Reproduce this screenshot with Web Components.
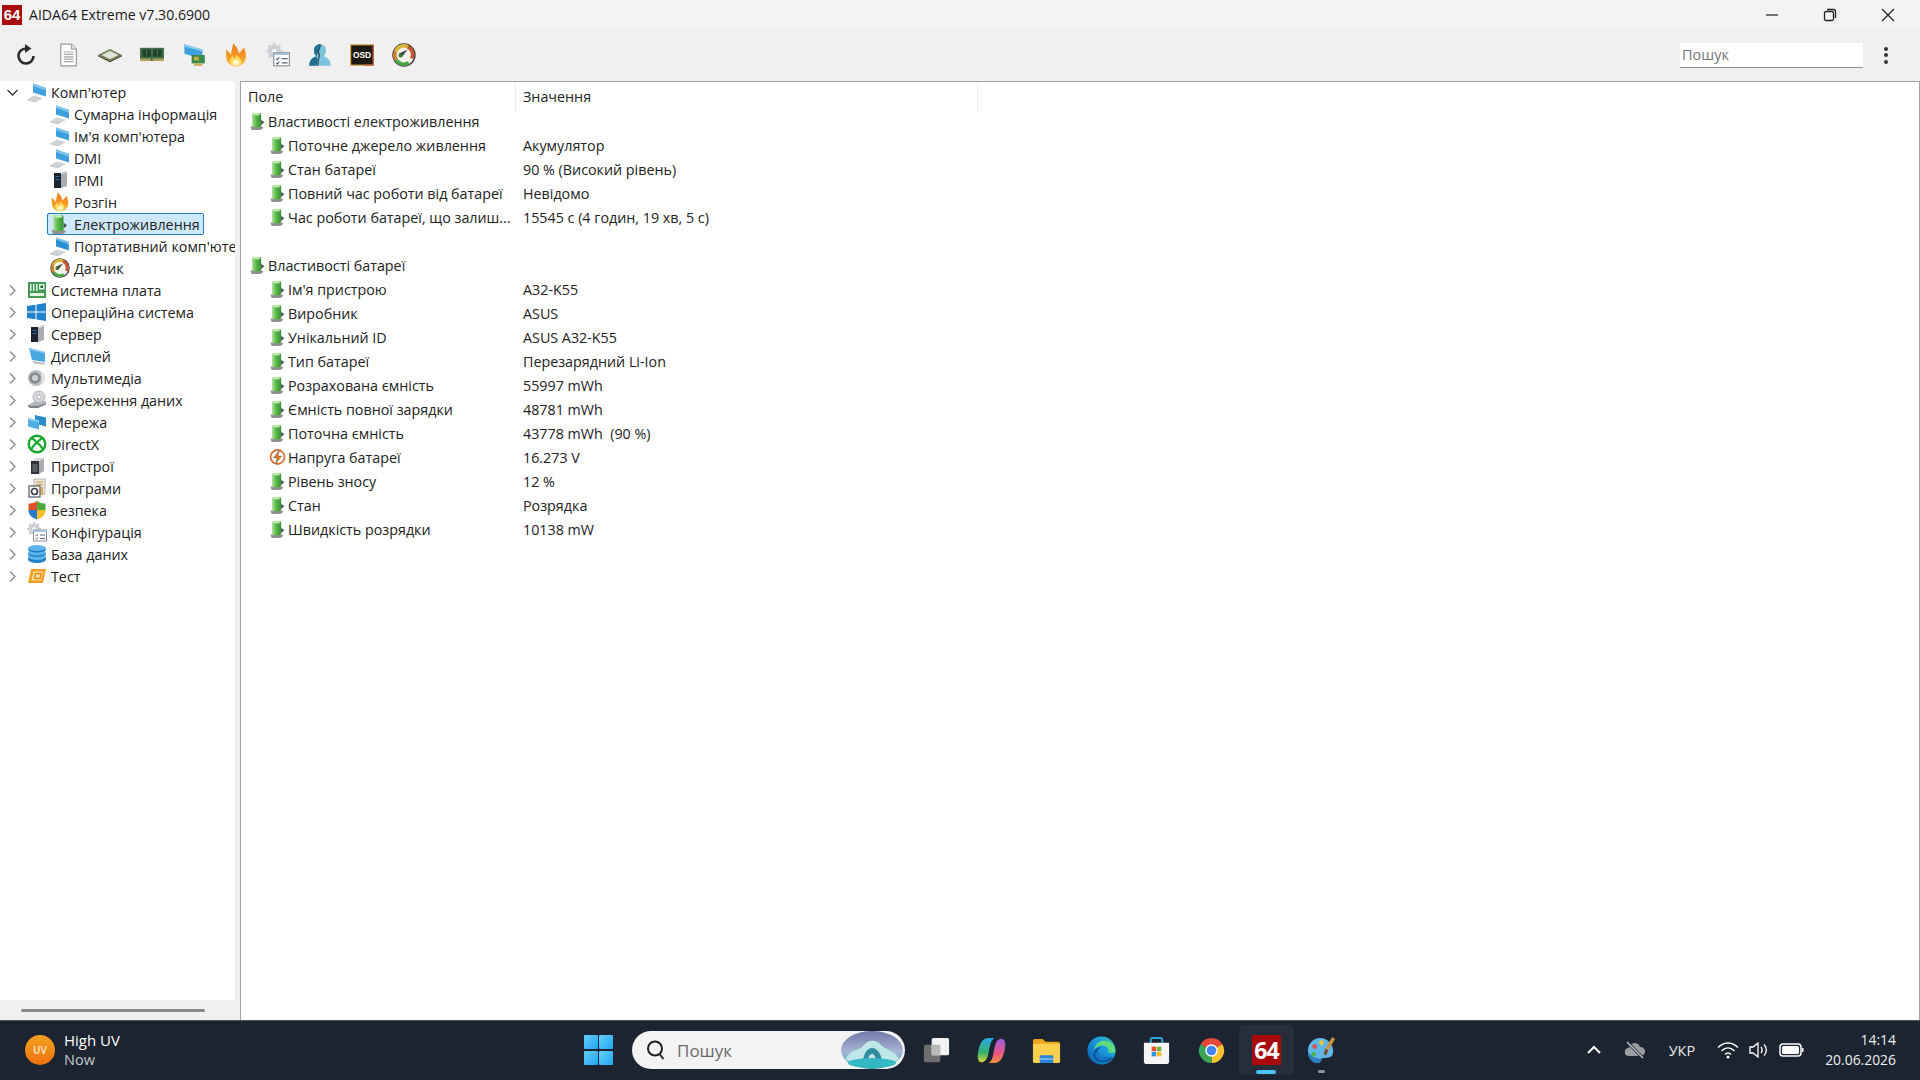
<!DOCTYPE html>
<html lang="uk">
<head>
<meta charset="utf-8">
<title>AIDA64 Extreme</title>
<style>
  html, body { margin: 0; height: 100%; overflow: hidden; }
  body { font-family: "Open Sans", "Noto Sans", sans-serif; font-size: 14.3px; color: #222; }
</style>
</head>
<body>
<aida-window>
  <title-bar slot="title">AIDA64 Extreme v7.30.6900</title-bar>
  <tool-bar slot="tools"></tool-bar>

  <nav-tree slot="nav">
    <tree-item open icon="computer">Комп'ютер</tree-item>
    <tree-item child icon="computer">Сумарна інформація</tree-item>
    <tree-item child icon="computer">Ім'я комп'ютера</tree-item>
    <tree-item child icon="computer">DMI</tree-item>
    <tree-item child icon="server">IPMI</tree-item>
    <tree-item child icon="flame">Розгін</tree-item>
    <tree-item child selected icon="power">Електроживлення</tree-item>
    <tree-item child icon="laptop">Портативний комп'ютер</tree-item>
    <tree-item child icon="gauge">Датчик</tree-item>
    <tree-item icon="board">Системна плата</tree-item>
    <tree-item icon="windows">Операційна система</tree-item>
    <tree-item icon="server">Сервер</tree-item>
    <tree-item icon="display">Дисплей</tree-item>
    <tree-item icon="media">Мультимедіа</tree-item>
    <tree-item icon="storage">Збереження даних</tree-item>
    <tree-item icon="network">Мережа</tree-item>
    <tree-item icon="directx">DirectX</tree-item>
    <tree-item icon="devices">Пристрої</tree-item>
    <tree-item icon="programs">Програми</tree-item>
    <tree-item icon="shield">Безпека</tree-item>
    <tree-item icon="config">Конфігурація</tree-item>
    <tree-item icon="database">База даних</tree-item>
    <tree-item icon="test">Тест</tree-item>
  </nav-tree>

  <info-table slot="main">
    <info-row group label="Властивості електроживлення"></info-row>
    <info-row label="Поточне джерело живлення" value="Акумулятор"></info-row>
    <info-row label="Стан батареї" value="90 % (Високий рівень)"></info-row>
    <info-row label="Повний час роботи від батареї" value="Невідомо"></info-row>
    <info-row label="Час роботи батареї, що залиш..." value="15545 с (4 годин, 19 хв, 5 с)"></info-row>
    <info-row blank></info-row>
    <info-row group label="Властивості батареї"></info-row>
    <info-row label="Ім'я пристрою" value="A32-K55"></info-row>
    <info-row label="Виробник" value="ASUS"></info-row>
    <info-row label="Унікальний ID" value="ASUS A32-K55"></info-row>
    <info-row label="Тип батареї" value="Перезарядний Li-Ion"></info-row>
    <info-row label="Розрахована ємність" value="55997 mWh"></info-row>
    <info-row label="Ємність повної зарядки" value="48781 mWh"></info-row>
    <info-row label="Поточна ємність" value="43778 mWh  (90 %)"></info-row>
    <info-row icon="volt" label="Напруга батареї" value="16.273 V"></info-row>
    <info-row label="Рівень зносу" value="12 %"></info-row>
    <info-row label="Стан" value="Розрядка"></info-row>
    <info-row label="Швидкість розрядки" value="10138 mW"></info-row>
  </info-table>

  <task-bar slot="taskbar"></task-bar>
</aida-window>

<script>
// Dibujos de los iconos (viewBox 0 0 20 20 salvo los de la barra de tareas)
const screenIcon = `
  <path d="M0 17.500l7-4 9 2.500-7 4z" fill="#d0d3d6"/>
  <path d="M0 17.500l9 2.500 0 .5-9-2.500z" fill="#9a9ea3"/>
  <path d="M6 1.5l13 4.5v8.5L6 10.5z" fill="#3f9fdc"/>
  <path d="M6 1.5l13 4.5v2.5L6 4z" fill="#7cc4ef"/>`;

const ICONS = {
  computer: screenIcon,
  laptop: screenIcon + `<path d="M6 3.5l11 3.8v6L6 9.8z" fill="#1f7fc4" opacity=".55"/>`,
  display: `<path d="M2 2l16 4v10L5 14z" fill="#45a6e0"/><path d="M2 2l16 4v1.5L3 4z" fill="#8acdf2"/>
    <path d="M5 15l13 2v1.5l-11-1z" fill="#b9bdc2"/>`,
  server: `<path d="M4 3h7v15H4z" fill="#1b2330"/><path d="M11 3l6-2v15l-6 2z" fill="#a8acb1"/>
    <path d="M5.5 6h4v1h-4zM5.5 9h4v1h-4z" fill="#2f6fb4"/><path d="M11 3l6-2v1.5l-6 2z" fill="#d3d5d8"/>`,
  flame: `<defs><linearGradient id="f" x1="0" y1="0" x2="0" y2="1"><stop offset="0" stop-color="#ea7a1c"/><stop offset=".6" stop-color="#f79a22"/><stop offset="1" stop-color="#ffc64a"/></linearGradient></defs>
    <path d="M10 19.500C5.500 19.500 2.500 16.500 2 13 1.700 10.500 2 8 1.500 5.500 3.500 7 5 8.500 5.800 10 6 6.500 7.500 3.500 7.500.3 10 2.500 12 5.500 12.500 8.500 14 7 15.500 5.500 16.500 3.500 18 7 18.500 10 18 13 17.500 16.500 14.500 19.500 10 19.500z" fill="url(#f)"/>
    <path d="M10 19c-2.800 0-4.800-1.700-4.800-4.300 0-1.700 1-3 1.800-4.500.5 1.300 1 2.300 2 3 .5-1 .8-2.200.8-3.700 2 1.700 4.800 3.700 4.800 6.300C14.600 17.300 12.800 19 10 19z" fill="#ffdc66"/>
    <ellipse cx="10" cy="16.500" rx="2.500" ry="2.300" fill="#fff6d2"/>`,
  power: `<defs><linearGradient id="g"><stop offset="0" stop-color="#a5dd8c"/><stop offset=".5" stop-color="#55b445"/><stop offset="1" stop-color="#37903a"/></linearGradient></defs>
    <path d="M1.500 16h12.500l2 1.500L13 20H3z" fill="#8f9193"/>
    <path d="M13.500 8.500l3.500 3-3.500 3z" fill="#464f46"/>
    <rect x="3.500" y="1" width="10" height="16" rx="2" fill="url(#g)"/>
    <ellipse cx="8.500" cy="2.400" rx="3.800" ry="1.300" fill="#c4edaf"/>`,
  gauge: `<circle cx="10" cy="10" r="9.200" fill="#f4f2ea" stroke="#3b3b3b" stroke-width="1.100"/>
    <path d="M3.500 14a7.500 7.500 0 0 1-.5-7" stroke="#cf7d2c" stroke-width="3" fill="none"/>
    <path d="M3 7a7.500 7.500 0 0 1 10-4" stroke="#d9b53a" stroke-width="3" fill="none"/>
    <path d="M3.500 14a7.500 7.500 0 0 0 10.500 2.500" stroke="#4aa545" stroke-width="3" fill="none"/>
    <path d="M13 3a7.500 7.500 0 0 1 3.500 10" stroke="#c9542e" stroke-width="3" fill="none"/>
    <path d="M5.500 9l7.500-3.500-5 6.500z" fill="#444"/><circle cx="7" cy="10.500" r="1.600" fill="#2e7d32"/>`,
  board: `<rect x="1" y="2" width="18" height="16" fill="#3f9950"/>
    <path d="M3 4h1.500v7H3zM6 4h1.500v7H6zM9 4h1.500v7H9z" fill="#e7f2e5"/>
    <rect x="12" y="4" width="5.500" height="5.500" fill="#e7f2e5"/><rect x="13.500" y="5.500" width="2.500" height="2.500" fill="#2f5f3a"/>
    <rect x="3" y="13" width="14" height="3" fill="#e7f2e5"/>`,
  windows: `<path d="M0 4l8.500-1.200v6.700H0z" fill="#1d83cf"/><path d="M9.500 2.600L19 1v8.500H9.500z" fill="#1d83cf"/>
    <path d="M0 10.500h8.500v6.700L0 16z" fill="#1d83cf"/><path d="M9.500 10.500H19V19l-9.500-1.600z" fill="#1d83cf"/>`,
  media: `<circle cx="9" cy="10" r="8" fill="#bcbfc3"/><circle cx="8" cy="10" r="5.800" fill="#898c90"/>
    <circle cx="8" cy="10" r="3" fill="#cfd2d5"/><path d="M13 2.500a8 8 0 0 1 0 15c2-3 2-12 0-15z" fill="#e3e4e6"/>`,
  storage: `<path d="M1 15l7-4h11v2.500l-8 4H3l-2-1z" fill="#b3b6ba"/><path d="M1 15l2 1h8l8-3v1.500l-8 3.500H3l-2-1.500z" fill="#7e8185"/>
    <circle cx="12" cy="7" r="6" fill="#d5d7da" stroke="#9da0a4" stroke-width=".7"/><circle cx="12" cy="7" r="2" fill="#fff" stroke="#9da0a4" stroke-width=".7"/>`,
  network: `<path d="M8 3l11 2.500v9L8 11.500z" fill="#2b8ac8"/><path d="M1 6l11 2.500v9L1 14.500z" fill="#4fb0e6"/><path d="M1 6l11 2.500v1.500L1 7.500z" fill="#9fd7f5"/>`,
  directx: `<circle cx="10" cy="10" r="8.300" fill="#fff" stroke="#19a82e" stroke-width="2.400"/>
    <path d="M5 4.500c2.500 1 4 3 5 4 1-1 2.500-3 5-4M4.500 15c1-3 3.500-4.500 5.500-6.500 2 2 4.500 3.500 5.500 6.500" fill="none" stroke="#19a82e" stroke-width="2.200"/>`,
  devices: `<path d="M4 5h8v13H4z" fill="#2f3235"/><path d="M12 5l5-3v13l-5 3z" fill="#a9acb0"/><path d="M4 5l5-3h8l-5 3z" fill="#dcdde0"/>
    <rect x="5.500" y="8" width="5" height="8" fill="#5b5f64"/>`,
  programs: `<path d="M7 1h11v15H7z" fill="#ece7da" stroke="#a4a4a0" stroke-width=".8"/><path d="M9 4h7M9 6.500h7" stroke="#c99b50"/>
    <rect x="2" y="8" width="11" height="11" fill="#fff" stroke="#55585c" stroke-width="1.200"/>
    <circle cx="7.500" cy="13.500" r="3" fill="none" stroke="#3d4147" stroke-width="1.700"/><path d="M15 9v8" stroke="#e0b04c" stroke-width="2"/>`,
  shield: `<path d="M10 1C7 3 4.500 3.500 1.500 3.500V10H10z" fill="#e4502a"/>
    <path d="M10 1c3 2 5.500 2.500 8.500 2.500V10H10z" fill="#4ea93c"/>
    <path d="M10 10h8.500c0 5-3.500 8-8.500 9.500z" fill="#f4bf26"/>
    <path d="M1.500 10H10v9.500C5 18 1.500 15 1.500 10z" fill="#2b78c8"/>`,
  config: `<circle cx="7" cy="7" r="5.500" fill="#cdd1d5"/><circle cx="7" cy="7" r="2" fill="#f4f5f6"/>
    <path d="M7 0v3M7 11v3M0 7h3M11 7h3M2 2l2 2M10 10l2 2M12 2l-2 2M2 12l2-2" stroke="#cdd1d5" stroke-width="2"/>
    <rect x="6.500" y="8" width="13" height="11" fill="#fff" stroke="#8d9298"/><rect x="6.500" y="8" width="13" height="2" fill="#a7c3dc"/>
    <path d="M8.500 13l1 1 1.500-2M13 13h5M8.500 16.500l1 1 1.500-2M13 16.500h5" stroke="#5a6a78" fill="none"/>`,
  database: `<ellipse cx="10" cy="15.500" rx="9" ry="3.500" fill="#1f7fc4"/><rect x="1" y="13" width="18" height="3" fill="#1f7fc4"/>
    <ellipse cx="10" cy="13" rx="9" ry="3" fill="#5db6ec"/><ellipse cx="10" cy="10" rx="9" ry="3" fill="#1f7fc4"/><ellipse cx="10" cy="8.500" rx="9" ry="3" fill="#5db6ec"/>
    <ellipse cx="10" cy="5.500" rx="9" ry="3" fill="#1f7fc4"/><ellipse cx="10" cy="4" rx="9" ry="3" fill="#5db6ec"/>`,
  test: `<path d="M4 3h15l-3 14H1z" fill="#f2a021"/><path d="M6.500 5.500h9.500l-2 9H4.500z" fill="#fbe2a9"/><path d="M8.500 7.500h5.500l-1 5H7.500z" fill="none" stroke="#e58a10" stroke-width="1.400"/>`,
  volt: `<circle cx="9.500" cy="10" r="7.800" fill="#fff" stroke="#d9763a" stroke-width="2"/>
    <path d="M11.500 2.500L5 11h4l-1.500 6.500L14 9h-4z" fill="#e07a1f" stroke="#555" stroke-width=".5"/>`,
  doc: `<path d="M4 1h9l4 4v14H4z" fill="#fff" stroke="#9a9a9a"/><path d="M13 1v4h4" fill="#e9e9e9" stroke="#9a9a9a"/>
    <path d="M6.500 7.500h8M6.500 9.500h8M6.500 11.500h8M6.500 13.500h8M6.500 15.500h8" stroke="#a8a8a8"/>`,
  chip: `<path d="M0 10l10-5 10 5-10 5z" fill="#6f7f4f"/><path d="M3 10l7-3.500 7 3.500-7 3.500z" fill="#dfe3da"/>
    <path d="M0 10l10 5 10-5v1l-10 5-10-5z" fill="#3c3a26"/>`,
  ram: `<rect x="0" y="4" width="20" height="11" fill="#3e6e4a"/><path d="M2 5.500h3v6H2zM6 5.500h3v6H6zM11 5.500h3v6h-3zM15 5.500h3v6h-3z" fill="#22402c"/>
    <path d="M0 13h9v2H0zM10.500 13H20v2h-9.500z" fill="#b0a15a"/>`,
  cards: `<path d="M2 1l15 4.500v8L2 9z" fill="#3f9fdc"/><path d="M2 1l15 4.500v1.500L2 3z" fill="#8acdf2"/>
    <rect x="8" y="10" width="11" height="7" fill="#3a8a4a"/><rect x="10" y="11.500" width="4" height="3" fill="#cfa93a"/><rect x="10" y="17" width="7" height="2" fill="#c9ae4c"/>`,
  user: `<path d="M1 19c0-5 3-7 6-8-2-2-2-4-2-5 0-3 2-5 5-5s5 2 5 5c0 2-1 4-2 5 3 1 6 3 6 8z" fill="#7cc2dc"/>
    <path d="M10 1c-3 0-5 2-5 5 0 1 0 3 2 5-3 1-6 3-6 8h6l1-5-1-3c1-2 2-4 1.500-6z" fill="#1f6f8f"/>
    <path d="M10 1c.5 2-.5 4-1.500 6l1 3-1 5-.5 4" fill="none" stroke="#16313d" stroke-width=".9"/>`,
  osd: `<rect x=".5" y="1.500" width="19" height="17" fill="#1e1814" stroke="#d8b24a"/><path d="M19.500 1.500v17H12" fill="none" stroke="#c9584a"/>
    <text x="10" y="12.800" text-anchor="middle" font-family="Liberation Sans, sans-serif" font-weight="700" font-size="7" fill="#fff">OSD</text>`
};

// Iconos de la barra de tareas (viewBox 0 0 32 32)
const TASK_ICONS = {
  view: `<rect x="3" y="10" width="17" height="18" rx="2" fill="#6e6e6e"/><rect x="11" y="3" width="18" height="18" rx="2" fill="#f2f2f2"/>
    <rect x="11" y="10" width="9" height="11" fill="#b9b9b9"/>`,
  copilot: `<defs><linearGradient id="a" x1="0" y1="0" x2="0" y2="1"><stop offset="0" stop-color="#2aa7e8"/><stop offset=".6" stop-color="#35b36c"/><stop offset="1" stop-color="#d9d13a"/></linearGradient>
    <linearGradient id="b" x1="0" y1="0" x2="0" y2="1"><stop offset="0" stop-color="#9a5ee0"/><stop offset=".6" stop-color="#e9567f"/><stop offset="1" stop-color="#f5913a"/></linearGradient></defs>
    <path d="M13 3h6c-3 2-4 5-5 10-1 6-2 14-7 15-4 1-6-3-5-9 1-8 4-16 11-16z" fill="url(#a)"/>
    <path d="M19 29h-6c3-2 4-5 5-10 1-6 2-14 7-15 4-1 6 3 5 9-1 8-4 16-11 16z" fill="url(#b)"/>`,
  folder: `<path d="M2 6a2 2 0 0 1 2-2h8l3 3h13a2 2 0 0 1 2 2v4H2z" fill="#e9a71e"/>
    <rect x="2" y="9" width="28" height="20" rx="2" fill="#fcd04f"/><rect x="9" y="21" width="14" height="8" rx="1" fill="#2a83d8"/><rect x="9" y="24" width="14" height="1.500" fill="#8cc7f5"/>`,
  edge: `<defs><linearGradient id="e" x1="0" y1="1" x2="1" y2="0"><stop offset="0" stop-color="#0c59a4"/><stop offset=".6" stop-color="#1b9de2"/><stop offset="1" stop-color="#35c1a8"/></linearGradient></defs>
    <circle cx="16" cy="16" r="14.500" fill="url(#e)"/>
    <path d="M30.500 18c0-8-6-13-13-12-5 .8-8.500 4.500-9 9 2-3 6-5 10-4 3.500.8 5 3 5 5.500 0 1-.5 1.500-1 2z" fill="#5fdc7a"/>
    <path d="M21 22.500c-5 2-9 0-9.500-4-.3-2.500 1.500-5 4.500-5.500-5-.5-8 3-8 7 0 5 5 9 12 8 4-.5 7-2.500 9-5.500-2 1-5 1.500-8 0z" fill="#0a4f96"/>
    <path d="M12 17c0 4 4 7.500 9.500 6 2 0 3.500-.5 5-1.500-3 4-6 5-9 5-4 0-8-3-8-7 0-1 .5-2 2.500-2.500z" fill="#1574c4"/>`,
  store: `<path d="M10 9V5a2 2 0 0 1 2-2h8a2 2 0 0 1 2 2v4" fill="none" stroke="#2ba3d6" stroke-width="2"/>
    <path d="M3 8h26v19a3 3 0 0 1-3 3H6a3 3 0 0 1-3-3z" fill="#f4f4f4"/>
    <rect x="11" y="12" width="4.600" height="4.600" fill="#e6502d"/><rect x="16.400" y="12" width="4.600" height="4.600" fill="#6fb53b"/>
    <rect x="11" y="17.400" width="4.600" height="4.600" fill="#2b96e0"/><rect x="16.400" y="17.400" width="4.600" height="4.600" fill="#f5b921"/>`,
  chrome: `<g transform="translate(2 2)"><path d="M14 14L2.740 7.500A13 13 0 0 1 25.260 7.500Z" fill="#e5493a"/>
    <path d="M14 14L25.260 7.500A13 13 0 0 1 14 27Z" fill="#fbc02d"/><path d="M14 14L14 27A13 13 0 0 1 2.740 7.500Z" fill="#3aa655"/>
    <circle cx="14" cy="14" r="6.400" fill="#fff"/><circle cx="14" cy="14" r="5" fill="#4285f4"/></g>`,
  paint: `<path d="M15 3C7 3 2 9 2 17c0 7 5 12 10 12 4 0 3-4 5-5 3-1 10 1 11-6 1-8-6-15-13-15z" fill="#5fb7e8"/>
    <path d="M2 17c0 7 5 12 10 12 4 0 3-4 5-5-6 1-11-1-15-7z" fill="#2b7fc0"/>
    <circle cx="9" cy="12" r="2.500" fill="#d9534a"/><circle cx="16" cy="8" r="2.500" fill="#f0c040"/><circle cx="8" cy="20" r="2.500" fill="#4caf50"/>
    <path d="M27 2l3 2-7 12-3-2z" fill="#c98f3c"/><path d="M20 14l3 2-2 5-3-1z" fill="#7a4a24"/>`
};

// Icono suelto: <app-icon name="power" size="18">
class AppIcon extends HTMLElement {
  constructor() {
    super();
    this.attachShadow({ mode: 'open' });
  }

  connectedCallback() {
    const size = this.getAttribute('size') || 20;
    const name = this.getAttribute('name');
    const task = this.hasAttribute('task');
    const body = task ? TASK_ICONS[name] : ICONS[name];
    const box = task ? 32 : 20;
    this.shadowRoot.innerHTML = `
      <style>:host { display: block; width: ${size}px; height: ${size}px; flex: none; } svg { display: block; }</style>
      <svg width="${size}" height="${size}" viewBox="0 0 ${box} ${box}">${body}</svg>`;
  }
}
customElements.define('app-icon', AppIcon);

// Ventana: barras arriba, dos columnas y la barra de tareas abajo
class AidaWindow extends HTMLElement {
  constructor() {
    super();
    this.attachShadow({ mode: 'open' });
  }

  connectedCallback() {
    this.shadowRoot.innerHTML = `
      <style>
        :host { display: flex; flex-direction: column; height: 1080px; background: #f0f0f0; }
        .body { flex: 1; display: flex; min-height: 0; }
        .left { width: 240px; flex: none; display: flex; flex-direction: column; }
        .main { flex: 1; min-width: 0; display: flex; }
      </style>
      <slot name="title"></slot>
      <slot name="tools"></slot>
      <div class="body">
        <div class="left"><slot name="nav"></slot></div>
        <div class="main"><slot name="main"></slot></div>
      </div>
      <slot name="taskbar"></slot>`;
  }
}
customElements.define('aida-window', AidaWindow);

class TitleBar extends HTMLElement {
  constructor() {
    super();
    this.attachShadow({ mode: 'open' });
  }

  connectedCallback() {
    this.shadowRoot.innerHTML = `
      <style>
        :host { display: flex; align-items: center; height: 29px; background: #f3f3f3; color: #1a1a1a; font-size: 14.100px; }
        .logo { width: 20px; height: 20px; margin: 0 7px 0 2px; background: #a90a0a; color: #fff; font: 700 15px/20px "Liberation Sans", sans-serif; text-align: center; }
        .text { flex: 1; padding-bottom: 1px; }
        .ctl { width: 58px; display: flex; justify-content: center; }
        svg { display: block; }
      </style>
      <span class="logo">64</span>
      <span class="text"><slot></slot></span>
      <span class="ctl"><svg width="14" height="14" viewBox="0 0 14 14"><path d="M1 7h12" stroke="#222" stroke-width="1.200"/></svg></span>
      <span class="ctl"><svg width="14" height="14" viewBox="0 0 14 14"><rect x="1.500" y="3.500" width="9" height="9" rx="1.500" fill="none" stroke="#222" stroke-width="1.300"/><path d="M4 1.500h6.500a2 2 0 0 1 2 2V10" fill="none" stroke="#222" stroke-width="1.300"/></svg></span>
      <span class="ctl" style="margin-right:3px"><svg width="14" height="14" viewBox="0 0 14 14"><path d="M1 1l12 12M13 1L1 13" stroke="#222" stroke-width="1.200"/></svg></span>`;
  }
}
customElements.define('title-bar', TitleBar);

class ToolBar extends HTMLElement {
  constructor() {
    super();
    this.attachShadow({ mode: 'open' });
  }

  connectedCallback() {
    const names = ['doc', 'chip', 'ram', 'cards', 'flame', 'config', 'user', 'osd', 'gauge'];
    const buttons = names.map((n) => `<span class="btn"><app-icon name="${n}" size="24"></app-icon></span>`).join('');
    this.shadowRoot.innerHTML = `
      <style>
        :host { display: flex; align-items: center; height: 52px; background: #f0f0f0; padding-left: 5px; }
        .btn { width: 42px; display: flex; justify-content: center; }
        .search { margin-left: auto; width: 183px; height: 25px; box-sizing: border-box; background: #fff; border-bottom: 1px solid #8f8f8f; color: #777; font-size: 14.500px; line-height: 24px; padding-left: 2px; }
        .more { width: 6px; margin: 0 30px 0 21px; display: grid; gap: 2.500px; }
        .more i { width: 4px; height: 4px; border-radius: 50%; background: #333; }
      </style>
      <span class="btn"><svg width="22" height="22" viewBox="0 0 22 22"><path d="M11 4.500a7.500 7.500 0 1 0 7.500 7.500" fill="none" stroke="#2b2b2b" stroke-width="2.600"/><path d="M10 0l6.500 4.500L10 9z" fill="#2b2b2b"/></svg></span>
      ${buttons}
      <span class="search">Пошук</span>
      <span class="more"><i></i><i></i><i></i></span>`;
  }
}
customElements.define('tool-bar', ToolBar);

class NavTree extends HTMLElement {
  constructor() {
    super();
    this.attachShadow({ mode: 'open' });
  }

  connectedCallback() {
    this.shadowRoot.innerHTML = `
      <style>
        :host { flex: 1; display: flex; flex-direction: column; min-height: 0; font-size: 14.300px; }
        .list { flex: 1; width: 235px; background: #fff; overflow: hidden; }
        .bar { height: 20px; display: flex; align-items: center; padding-left: 21px; }
        .bar i { width: 184px; height: 3px; background: #8a8a8a; border-radius: 2px; }
      </style>
      <div class="list"><slot></slot></div>
      <div class="bar"><i></i></div>`;
  }
}
customElements.define('nav-tree', NavTree);

class TreeItem extends HTMLElement {
  constructor() {
    super();
    this.attachShadow({ mode: 'open' });
  }

  connectedCallback() {
    const child = this.hasAttribute('child');
    const open = this.hasAttribute('open');
    const chevron = open
      ? '<path d="M1.500 4l5 5 5-5" fill="none" stroke="#333" stroke-width="1.300"/>'
      : '<path d="M4 1.500l5 5-5 5" fill="none" stroke="#888" stroke-width="1.300"/>';
    this.shadowRoot.innerHTML = `
      <style>
        :host { display: flex; height: 22px; align-items: stretch; white-space: nowrap; }
        .lead { width: ${child ? 47 : 24}px; flex: none; display: flex; align-items: center; padding-left: 6px; box-sizing: border-box; }
        .item { display: flex; align-items: center; gap: 4px; padding: 0 3px 0 2px; border: 1px solid transparent; border-radius: 2px; }
        :host([selected]) .item { background: #cde8fb; border-color: #1c82c4; }
        span { line-height: 20px; padding-top: 2px; }
      </style>
      <div class="lead">${child ? '' : `<svg width="13" height="13" viewBox="0 0 13 13">${chevron}</svg>`}</div>
      <div class="item"><app-icon name="${this.getAttribute('icon')}" size="20"></app-icon><span><slot></slot></span></div>`;
  }
}
customElements.define('tree-item', TreeItem);

class InfoTable extends HTMLElement {
  constructor() {
    super();
    this.attachShadow({ mode: 'open' });
  }

  connectedCallback() {
    this.shadowRoot.innerHTML = `
      <style>
        :host { flex: 1; box-sizing: border-box; background: #fff; border: 1px solid #a3a3a3; border-width: 1px 1px 0 1px; min-width: 0; }
        .head { display: grid; grid-template-columns: 275px 462px 1fr; height: 27px; }
        .head span { padding-left: 7px; line-height: 30px; border-right: 1px solid #ececec; }
        .head span:last-child { border: 0; }
      </style>
      <div class="head"><span>Поле</span><span>Значення</span><span></span></div>
      <slot></slot>`;
  }
}
customElements.define('info-table', InfoTable);

class InfoRow extends HTMLElement {
  constructor() {
    super();
    this.attachShadow({ mode: 'open' });
  }

  connectedCallback() {
    const label = this.getAttribute('label') || '';
    const value = this.getAttribute('value') || '';
    const icon = this.getAttribute('icon') || 'power';
    const blank = this.hasAttribute('blank');
    this.shadowRoot.innerHTML = `
      <style>
        :host { display: grid; grid-template-columns: 275px 1fr; height: 24px; align-items: center; }
        .field { display: flex; align-items: center; gap: 1px; padding-left: 28px; white-space: nowrap; }
        :host([group]) .field { padding-left: 8px; }
        .value { padding-left: 7px; white-space: pre; }
      </style>
      <div class="field">${blank ? '' : `<app-icon name="${icon}" size="18"></app-icon>`}<span>${label}</span></div>
      <div class="value">${value}</div>`;
  }
}
customElements.define('info-row', InfoRow);

class TaskBar extends HTMLElement {
  constructor() {
    super();
    this.attachShadow({ mode: 'open' });
  }

  connectedCallback() {
    const apps = ['view', 'copilot', 'folder', 'edge', 'store', 'chrome'];
    const buttons = apps.map((n) => `<span class="app"><app-icon task name="${n}" size="31"></app-icon></span>`).join('');
    this.shadowRoot.innerHTML = `
      <style>
        :host { display: grid; grid-template-columns: 571px auto 1fr; align-items: center; height: 60px; background: #1b2430; color: #fff; box-shadow: inset 0 1px #4a525c; }
        .weather { display: flex; align-items: center; gap: 9px; padding-left: 25px; line-height: 20px; font-size: 15px; }
        .uv { width: 30px; height: 30px; border-radius: 50%; background: linear-gradient(#f0a21e, #f0700f); color: #f7dcb0; font: 700 10px/30px "Open Sans", sans-serif; text-align: center; }
        .weather small { display: block; font-size: 14.500px; color: #c4c8cc; }
        .mid { display: flex; align-items: center; }
        .app { position: relative; width: 55px; height: 50px; display: flex; align-items: center; justify-content: center; }
        .app.on { background: #252e3a; border-radius: 5px; }
        .app.on::after { content: ""; position: absolute; left: 17px; bottom: 1px; width: 20px; height: 4px; border-radius: 2px; background: #4cc2ff; }
        .app.dot::after { content: ""; position: absolute; left: 24px; bottom: 2px; width: 7px; height: 3px; border-radius: 2px; background: #8f949a; }
        .red { width: 29px; height: 30px; background: #a90a0a; font: 700 23px/30px "Open Sans", sans-serif; text-align: center; letter-spacing: -1px; color: #fff; }
        .start { display: grid; grid-template-columns: 14px 14px; gap: 1.500px; }
        .start i { height: 14px; background: linear-gradient(135deg, #67d0fb, #1fa5ef); border-radius: 1px; }
        .search { width: 273px; height: 38px; margin: 0 4px 0 6px; box-sizing: border-box; border-radius: 19px; background: #f3f3f3; color: #6a6a6a; display: flex; align-items: center; font-size: 17px; padding-left: 14px; gap: 11px; overflow: hidden; }
        .search svg.dome { margin-left: auto; margin-right: 1px; }
        .tray { display: flex; align-items: center; justify-content: flex-end; padding-right: 24px; }
        .tray > * { flex: none; }
        .clock { margin-left: 21px; text-align: right; font-size: 13.900px; line-height: 20px; color: #f0f0f0; }
        .lang { font-size: 14.500px; margin: 0 22px 0 23px; color: #e8e8e8; }
      </style>
      <div class="weather"><span class="uv">UV</span><div>High UV<small>Now</small></div></div>
      <div class="mid">
        <span class="app"><span class="start"><i></i><i></i><i></i><i></i></span></span>
        <span class="search">
          <svg width="20" height="22" viewBox="0 0 20 22"><circle cx="9" cy="9.500" r="7" fill="none" stroke="#222" stroke-width="2"/><path d="M13.500 15l4 5" stroke="#222" stroke-width="2"/></svg>
          <span>Пошук</span>
          <svg class="dome" width="64" height="38" viewBox="0 0 64 38">
            <defs><linearGradient id="d" x1="0" y1="0" x2="0" y2="1"><stop offset="0" stop-color="#6f78a8"/><stop offset=".55" stop-color="#a9b6d4"/><stop offset="1" stop-color="#2fa7b5"/></linearGradient></defs>
            <ellipse cx="32" cy="19" rx="31" ry="19" fill="url(#d)"/>
            <path d="M6 28c4-10 14-8 18-14 4-5 12-6 17 0 6 6 14 5 18 14-8 8-46 8-53 0z" fill="#bfe6e8"/>
            <path d="M23 30c1-9 5-13 9-13s9 4 10 13h-6c-.5-5-2-7-4-7s-3.500 2-4 7z" fill="#2f8e9c"/>
            <ellipse cx="32" cy="32" rx="24" ry="5" fill="#33b8c4"/>
          </svg>
        </span>
        ${buttons}
        <span class="app on"><span class="red">64</span></span>
        <span class="app dot"><app-icon task name="paint" size="31"></app-icon></span>
      </div>
      <div class="tray">
        <svg width="16" height="10" viewBox="0 0 16 10"><path d="M2 8l6-6 6 6" fill="none" stroke="#fff" stroke-width="2"/></svg>
        <svg style="margin-left:22px" width="22" height="18" viewBox="0 0 22 18"><path d="M5 15a4 4 0 0 1-.5-8A6 6 0 0 1 16 6a4.500 4.500 0 0 1 1 9z" fill="#9a9da1"/><path d="M3 1l16 16" stroke="#1b2430" stroke-width="3"/><path d="M3 1l16 16" stroke="#c9ccd0" stroke-width="1.300"/></svg>
        <span class="lang">УКР</span>
        <svg width="22" height="18" viewBox="0 0 22 18"><path d="M1 6.500c6-6 14-6 20 0M4.500 10c4-4 9-4 13 0M8 13.500c2-2 4-2 6 0" fill="none" stroke="#fff" stroke-width="1.500"/><circle cx="11" cy="16" r="1.500" fill="#fff"/></svg>
        <svg style="margin-left:10px" width="20" height="18" viewBox="0 0 20 18"><path d="M1 6h3l5-4v14l-5-4H1z" fill="none" stroke="#fff" stroke-width="1.300"/><path d="M12 6c1.500 2 1.500 4 0 6M15 3.500c3 3.500 3 7.500 0 11" fill="none" stroke="#fff" stroke-width="1.300"/></svg>
        <svg style="margin-left:10px" width="25" height="14" viewBox="0 0 25 14"><rect x="1" y="1" width="21" height="12" rx="3" fill="none" stroke="#fff" stroke-width="1.500"/><rect x="3" y="3" width="17" height="8" rx="1.500" fill="#fff"/><rect x="23" y="5" width="1.500" height="4" fill="#fff"/></svg>
        <div class="clock">14:14<br>20.06.2026</div>
      </div>`;
  }
}
customElements.define('task-bar', TaskBar);
</script>
</body>
</html>
